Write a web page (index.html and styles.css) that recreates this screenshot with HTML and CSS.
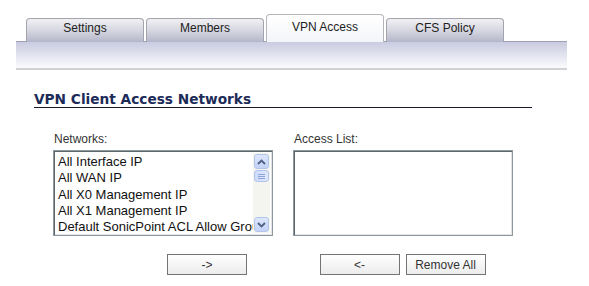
FILE: index.html
```html
<!DOCTYPE html>
<html lang="en">
<head>
  <meta charset="UTF-8">
  <title>Group Settings - VPN Access</title>
  <link rel="stylesheet" href="styles.css">
</head>
<body>

  <!-- Tabs -->
  <div class="tab-area">
    <div class="tabs">
      <div class="tab">Settings</div>
      <div class="tab">Members</div>
      <div class="tab active">VPN Access</div>
      <div class="tab">CFS Policy</div>
    </div>
    <div class="tab-bar"></div>
  </div>

  <div class="section">
    <h2>VPN Client Access Networks</h2>

    <div class="lists">
      <div class="col">
        <label>Networks:</label>
        <div class="listbox">
          <div class="items">
            <div>All Interface IP</div>
            <div>All WAN IP</div>
            <div>All X0 Management IP</div>
            <div>All X1 Management IP</div>
            <div>Default SonicPoint ACL Allow Group</div>
          </div>
          <div class="scrollbar">
            <div class="sb-btn">
              <svg width="9" height="6" viewBox="0 0 9 6"><path d="M1 5 L4.5 1.5 L8 5" fill="none" stroke="#4d6185" stroke-width="1.8"/></svg>
            </div>
            <div class="sb-thumb">
              <span></span><span></span><span></span>
            </div>
            <div class="sb-track"></div>
            <div class="sb-btn">
              <svg width="9" height="6" viewBox="0 0 9 6"><path d="M1 1 L4.5 4.5 L8 1" fill="none" stroke="#4d6185" stroke-width="1.8"/></svg>
            </div>
          </div>
        </div>
      </div>

      <div class="col">
        <label>Access List:</label>
        <div class="listbox empty"></div>
      </div>
    </div>

    <div class="actions">
      <div class="left-btns">
        <button>-&gt;</button>
      </div>
      <div class="right-btns">
        <button>&lt;-</button>
        <button>Remove All</button>
      </div>
    </div>
  </div>

</body>
</html>
```

FILE: styles.css
```css
* {
  box-sizing: border-box;
}

body {
  margin: 0;
  background: #fff;
  font-family: "Liberation Sans", Arial, sans-serif;
  color: #222;
}

/* tabs */
.tab-area {
  margin: 14px 22px 0 16px;
}

.tabs {
  display: flex;
  align-items: flex-end;
  gap: 2px;
  padding-left: 10px;
  height: 27px;
}

.tab {
  width: 118px;
  height: 24px;
  margin-bottom: -1px;
  border: 1px solid #a3a4ae;
  border-bottom: none;
  border-radius: 4px 4px 0 0;
  background: linear-gradient(#f1f1f4, #d3d4de 55%, #b4b5c9);
  font-size: 12px;
  line-height: 19px;
  text-align: center;
  color: #222;
}

.tab.active {
  height: 28px;
  background: linear-gradient(#ffffff, #f4f5f9);
  border-color: #b4b5bb;
  position: relative;
  z-index: 1;
  line-height: 24px;
}

.tab-bar {
  height: 29px;
  border-top: 1px solid #9fa1b3;
  border-bottom: 2px solid #d2d2d6;
  background: linear-gradient(#c9cbe0, #e7e8f2 60%, #fbfbfd);
}

/* section */
.section {
  margin-left: 34px;
  width: 498px;
}

h2 {
  margin: 21px 0 0;
  font-family: "DejaVu Sans", Verdana, sans-serif;
  font-size: 13.7px;
  line-height: 16px;
  color: #1d2b58;
  border-bottom: 1px solid #1a1a2a;
}

.lists {
  display: flex;
  gap: 20px;
  margin-top: 24px;
  padding-left: 19px;
}

.col label {
  display: block;
  font-size: 12px;
  line-height: 14px;
  color: #333;
  padding-left: 1px;
  margin-bottom: 4px;
}

.listbox {
  display: flex;
  width: 220px;
  height: 86px;
  border: 1px solid #8e999f;
  box-shadow: inset 1px 1px 0 #5d676c, inset -1px -1px 0 #dfe3e5;
  padding: 2px;
  background: #fff;
}

.items {
  flex: 1;
  overflow: hidden;
  white-space: nowrap;
  font-size: 13px;
  line-height: 16.3px;
  color: #111;
  padding: 1px 0 0 2px;
}

.scrollbar {
  width: 17px;
  display: flex;
  flex-direction: column;
  background: #f5f5f0;
  padding: 1px 0;
}

.sb-btn {
  height: 15px;
  margin: 0 1px;
  border: 1px solid #b3c4ea;
  border-radius: 3px;
  background: linear-gradient(#dde7fd, #c3d3f7);
  display: flex;
  align-items: center;
  justify-content: center;
}

.sb-thumb {
  height: 12px;
  margin: 1px 1px 0;
  border: 1px solid #b3c4ea;
  border-radius: 3px;
  background: linear-gradient(90deg, #cddbfb, #dfe8fd);
  display: flex;
  flex-direction: column;
  align-items: center;
  justify-content: center;
  gap: 1px;
}

.sb-thumb span {
  display: block;
  width: 7px;
  height: 1px;
  background: #8fa6d8;
}

.sb-track {
  flex: 1;
}

/* buttons */
.actions {
  display: flex;
  gap: 20px;
  margin-top: 18px;
  padding-left: 19px;
}

.left-btns {
  width: 220px;
  padding-left: 114px;
}

.right-btns {
  width: 219px;
  display: flex;
  justify-content: center;
  gap: 6px;
}

button {
  width: 80px;
  height: 21px;
  padding: 0;
  border: 1px solid #747474;
  border-radius: 0;
  background: linear-gradient(#ffffff, #ececec);
  font-family: "Liberation Sans", Arial, sans-serif;
  font-size: 12px;
  color: #333;
  cursor: pointer;
}
```
